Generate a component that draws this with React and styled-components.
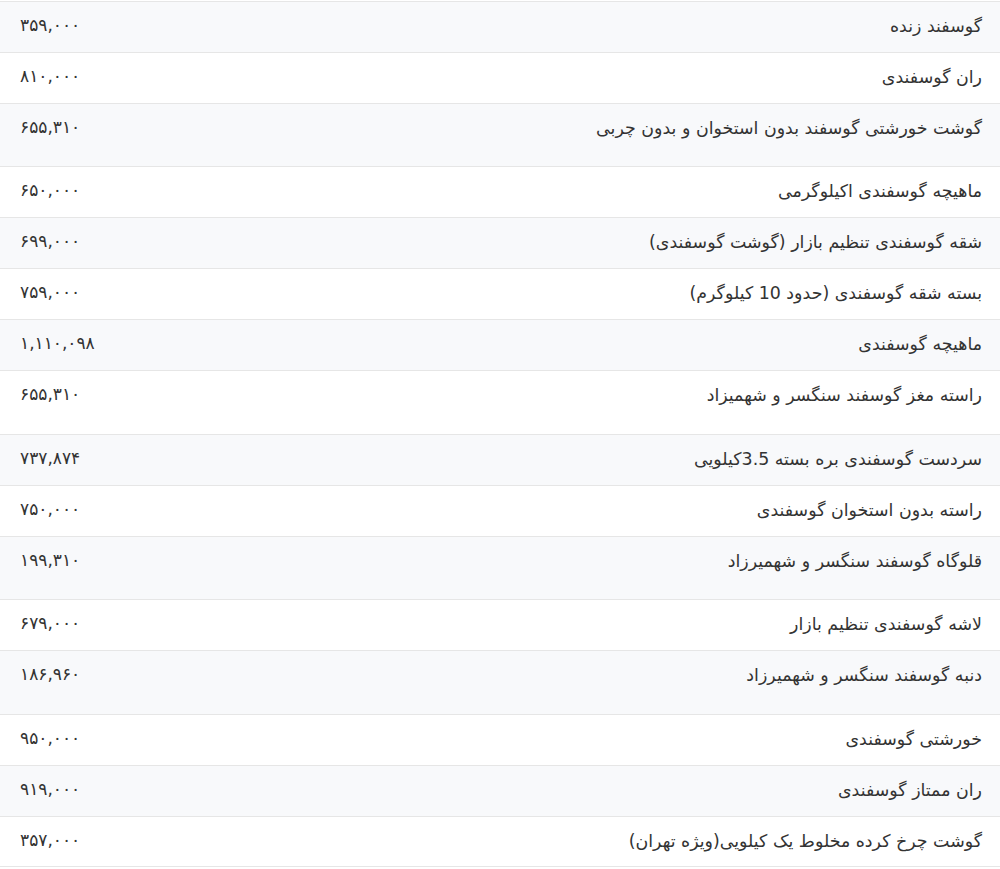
import React from "react";
import styled, { createGlobalStyle } from "styled-components";

const rows = [
  { name: "گوسفند زنده", price: "۳۵۹,۰۰۰" },
  { name: "ران گوسفندی", price: "۸۱۰,۰۰۰" },
  { name: "گوشت خورشتی گوسفند بدون استخوان و بدون چربی", price: "۶۵۵,۳۱۰", h: 63 },
  { name: "ماهیچه گوسفندی اکیلوگرمی", price: "۶۵۰,۰۰۰" },
  { name: "شقه گوسفندی تنظیم بازار (گوشت گوسفندی)", price: "۶۹۹,۰۰۰" },
  { name: "بسته شقه گوسفندی (حدود 10 کیلوگرم)", price: "۷۵۹,۰۰۰" },
  { name: "ماهیچه گوسفندی", price: "۱,۱۱۰,۰۹۸" },
  { name: "راسته مغز گوسفند سنگسر و شهمیزاد", price: "۶۵۵,۳۱۰", h: 64 },
  { name: "سردست گوسفندی بره بسته 3.5کیلویی", price: "۷۳۷,۸۷۴" },
  { name: "راسته بدون استخوان گوسفندی", price: "۷۵۰,۰۰۰" },
  { name: "قلوگاه گوسفند سنگسر و شهمیرزاد", price: "۱۹۹,۳۱۰", h: 63 },
  { name: "لاشه گوسفندی تنظیم بازار", price: "۶۷۹,۰۰۰" },
  { name: "دنبه گوسفند سنگسر و شهمیرزاد", price: "۱۸۶,۹۶۰", h: 64 },
  { name: "خورشتی گوسفندی", price: "۹۵۰,۰۰۰" },
  { name: "ران ممتاز گوسفندی", price: "۹۱۹,۰۰۰" },
  { name: "گوشت چرخ کرده مخلوط یک کیلویی(ویژه تهران)", price: "۳۵۷,۰۰۰" },
];

const GlobalStyle = createGlobalStyle`
  body {
    margin: 0;
    background: #fff;
    font-family: "DejaVu Sans", "Noto Sans", sans-serif;
    color: #333;
  }
`;

const Table = styled.div`
  direction: rtl;
  width: 1000px;
  padding-top: 1px;
`;

const Row = styled.div`
  display: flex;
  justify-content: space-between;
  align-items: flex-start;
  height: ${(p) => p.$h || 51}px;
  box-sizing: border-box;
  border-top: 1px solid #e6e6e6;
  background: ${(p) => (p.$striped ? "#f8f9fb" : "#fff")};
  &:last-child {
    border-bottom: 1px solid #e6e6e6;
  }
`;

const Name = styled.div`
  padding: 11px 18px 0 0;
  font-size: 17.4px;
  line-height: 26px;
  text-align: right;
`;

const Price = styled.div`
  padding: 10px 0 0 20px;
  font-size: 17px;
  line-height: 26px;
  direction: ltr;
  text-align: left;
  min-width: 120px;
`;

export default function App() {
  return (
    <>
      <GlobalStyle />
      <Table>
        {rows.map((r, i) => (
          <Row key={i} $h={r.h} $striped={i % 2 === 0}>
            <Name>{r.name}</Name>
            <Price>{r.price}</Price>
          </Row>
        ))}
      </Table>
    </>
  );
}
